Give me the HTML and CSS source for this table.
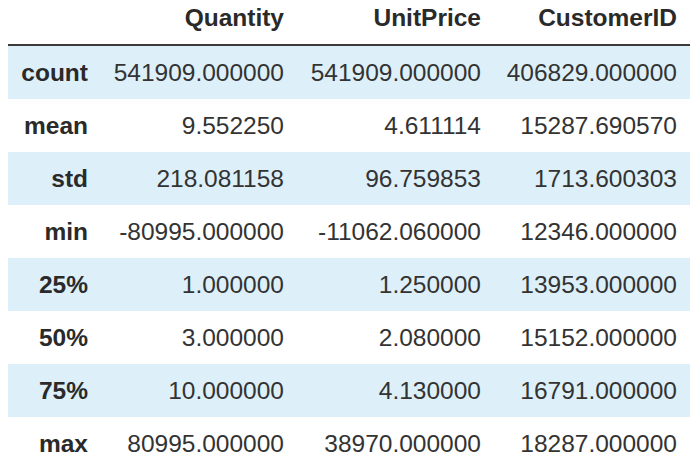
FILE: index.html
```html
<!DOCTYPE html>
<html>
<head>
<meta charset="utf-8">
<link rel="stylesheet" href="styles.css">
</head>
<body>
<table class="df">
  <colgroup>
    <col class="c-idx"><col class="c-1"><col class="c-2"><col class="c-3">
  </colgroup>
  <thead>
    <tr><th></th><th>Quantity</th><th>UnitPrice</th><th>CustomerID</th></tr>
  </thead>
  <tbody>
    <tr><th>count</th><td>541909.000000</td><td>541909.000000</td><td>406829.000000</td></tr>
    <tr><th>mean</th><td>9.552250</td><td>4.611114</td><td>15287.690570</td></tr>
    <tr><th>std</th><td>218.081158</td><td>96.759853</td><td>1713.600303</td></tr>
    <tr><th>min</th><td>-80995.000000</td><td>-11062.060000</td><td>12346.000000</td></tr>
    <tr><th>25%</th><td>1.000000</td><td>1.250000</td><td>13953.000000</td></tr>
    <tr><th>50%</th><td>3.000000</td><td>2.080000</td><td>15152.000000</td></tr>
    <tr><th>75%</th><td>10.000000</td><td>4.130000</td><td>16791.000000</td></tr>
    <tr><th>max</th><td>80995.000000</td><td>38970.000000</td><td>18287.000000</td></tr>
  </tbody>
</table>
</body>
</html>
```
FILE: styles.css
```css
html, body {
  margin: 0;
  padding: 0;
  background: #ffffff;
}
body {
  overflow: hidden;
}
.df {
  margin-left: 8px;
  border-collapse: collapse;
  border-spacing: 0;
  table-layout: fixed;
  width: 682px;
  font-family: "Liberation Sans", Arial, sans-serif;
  font-size: 24.5px;
  color: #333333;
}
.c-idx { width: 93px; }
.c-1 { width: 196px; }
.c-2 { width: 197px; }
.c-3 { width: 196px; }
.df th, .df td {
  padding: 0 13px 0 12px;
  text-align: right;
  white-space: nowrap;
  line-height: 28px;
}
.df th {
  font-weight: bold;
  color: #2a2a2a;
}
.df thead th {
  height: 40px;
  padding-top: 4px;
  vertical-align: top;
  border-bottom: 2px solid #3a3a3a;
}
.df tbody th, .df tbody td {
  height: 53px;
  vertical-align: middle;
}
.df tbody tr:nth-child(odd) {
  background: #ddf0fa;
}
```
